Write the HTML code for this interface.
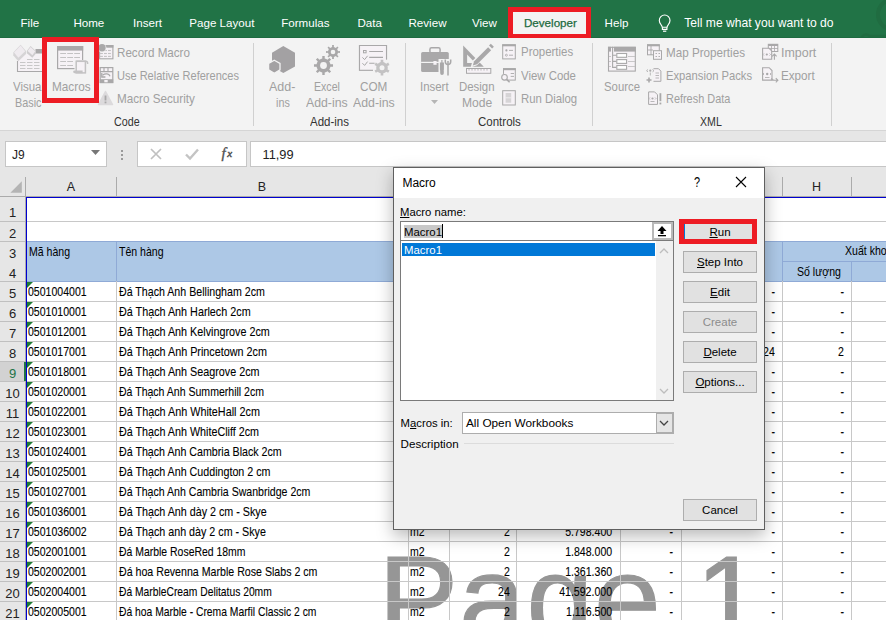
<!DOCTYPE html>
<html><head><meta charset="utf-8"><style>
html,body{margin:0;padding:0;width:886px;height:620px;overflow:hidden;background:#fff;font-family:"Liberation Sans", sans-serif;}
.t{position:absolute;white-space:nowrap;line-height:20px;}
.g .t{-webkit-text-stroke:0.1px currentColor}
u{text-decoration:underline;text-underline-offset:1px}
</style></head><body>
<div style="position:absolute;left:0px;top:0px;width:886px;height:38px;background:#217346"></div>
<div class="t" style="left:20.5px;top:12.98px;font-size:11.6px;color:#fff;">File</div>
<div class="t" style="left:73.4px;top:12.98px;font-size:11.6px;color:#fff;">Home</div>
<div class="t" style="left:133px;top:12.98px;font-size:11.6px;color:#fff;">Insert</div>
<div class="t" style="left:189.3px;top:12.98px;font-size:11.6px;color:#fff;">Page Layout</div>
<div class="t" style="left:281.2px;top:12.98px;font-size:11.6px;color:#fff;">Formulas</div>
<div class="t" style="left:357.4px;top:12.98px;font-size:11.6px;color:#fff;">Data</div>
<div class="t" style="left:408.5px;top:12.98px;font-size:11.6px;color:#fff;">Review</div>
<div class="t" style="left:471.9px;top:12.98px;font-size:11.6px;color:#fff;">View</div>
<div class="t" style="left:604.6px;top:12.98px;font-size:11.6px;color:#fff;">Help</div>
<svg style="position:absolute;left:840px;top:0px" width="46" height="38" viewBox="0 0 46 38"><circle cx="53" cy="14.5" r="15" fill="none" stroke="#206c41" stroke-width="4"/><circle cx="26" cy="39" r="4.5" fill="none" stroke="#206c41" stroke-width="2.5"/><path d="M30 35.8h16" stroke="#206c41" stroke-width="2"/></svg>
<div style="position:absolute;left:0px;top:37px;width:886px;height:1px;background:#1d6a40"></div>
<div style="position:absolute;left:508px;top:7px;width:83px;height:32px;background:#f3f3f3;box-sizing:border-box;border:5px solid #ed1c24"></div>
<div class="t" style="left:524px;top:12.98px;font-size:11.6px;color:#1d6b3e;-webkit-text-stroke:0.25px #1d6b3e;">Developer</div>
<svg style="position:absolute;left:650px;top:8px" width="30" height="28" viewBox="0 0 30 28"><path d="M12.3 19.2C11.6 16.8 9.3 15.2 9.3 12.4A5.35 5.35 0 1 1 20 12.4C20 15.2 17.7 16.8 17 19.2z" fill="none" stroke="#fff" stroke-width="1.15"/><path d="M12.4 19.2V21.4H16.9V19.2" fill="none" stroke="#fff" stroke-width="1.15"/><path d="M13 23.2H16.3" stroke="#fff" stroke-width="1.2"/></svg>
<div class="t" style="left:684.3px;top:12.81px;font-size:12.1px;color:#fff;">Tell me what you want to do</div>
<div style="position:absolute;left:0px;top:38px;width:886px;height:92px;background:#f3f3f3"></div>
<div style="position:absolute;left:0px;top:130px;width:886px;height:1px;background:#d5d5d5"></div>
<div style="position:absolute;left:253px;top:43px;width:1px;height:83px;background:#d0d0d0"></div>
<div style="position:absolute;left:405px;top:43px;width:1px;height:83px;background:#d0d0d0"></div>
<div style="position:absolute;left:592px;top:43px;width:1px;height:83px;background:#d0d0d0"></div>
<div style="position:absolute;left:831px;top:43px;width:1px;height:83px;background:#d0d0d0"></div>
<div class="t" style="left:113.6px;transform: scaleX(0.8638);transform-origin:0 0;top:112.30px;font-size:12.4px;color:#333;">Code</div>
<div class="t" style="left:309.5px;transform: scaleX(0.9278);transform-origin:0 0;top:112.20px;font-size:12.4px;color:#333;">Add-ins</div>
<div class="t" style="left:477.7px;transform: scaleX(0.9288);transform-origin:0 0;top:112.20px;font-size:12.4px;color:#333;">Controls</div>
<div class="t" style="left:700.0px;transform: scaleX(0.8555);transform-origin:0 0;top:112.20px;font-size:12.4px;color:#333;">XML</div>
<div class="t" style="left:13.3px;transform: scaleX(0.9242);transform-origin:0 0;top:76.50px;font-size:12.4px;color:#a0a0a0;">Visual</div>
<div class="t" style="left:15.2px;transform: scaleX(0.8741);transform-origin:0 0;top:93.00px;font-size:12.4px;color:#a0a0a0;">Basic</div>
<div class="t" style="left:52.3px;transform: scaleX(0.9491);transform-origin:0 0;top:76.50px;font-size:12.4px;color:#a0a0a0;">Macros</div>
<div class="t" style="left:269.2px;transform: scaleX(1.0052);transform-origin:0 0;top:76.50px;font-size:12.4px;color:#a0a0a0;">Add-</div>
<div class="t" style="left:275.9px;transform: scaleX(0.8695);transform-origin:0 0;top:93.00px;font-size:12.4px;color:#a0a0a0;">ins</div>
<div class="t" style="left:314.3px;transform: scaleX(0.8543);transform-origin:0 0;top:76.50px;font-size:12.4px;color:#a0a0a0;">Excel</div>
<div class="t" style="left:306.2px;transform: scaleX(0.992);transform-origin:0 0;top:93.00px;font-size:12.4px;color:#a0a0a0;">Add-ins</div>
<div class="t" style="left:360.4px;transform: scaleX(0.9463);transform-origin:0 0;top:76.50px;font-size:12.4px;color:#a0a0a0;">COM</div>
<div class="t" style="left:353.0px;transform: scaleX(0.9944);transform-origin:0 0;top:93.00px;font-size:12.4px;color:#a0a0a0;">Add-ins</div>
<div class="t" style="left:420.4px;transform: scaleX(0.9226);transform-origin:0 0;top:76.50px;font-size:12.4px;color:#a0a0a0;">Insert</div>
<div class="t" style="left:459.0px;transform: scaleX(0.9217);transform-origin:0 0;top:76.50px;font-size:12.4px;color:#a0a0a0;">Design</div>
<div class="t" style="left:461.8px;transform: scaleX(0.9742);transform-origin:0 0;top:93.00px;font-size:12.4px;color:#a0a0a0;">Mode</div>
<div class="t" style="left:604.1px;transform: scaleX(0.9158);transform-origin:0 0;top:76.70px;font-size:12.4px;color:#a0a0a0;">Source</div>
<div class="t" style="left:116.7px;transform: scaleX(0.9374);transform-origin:0 0;top:42.70px;font-size:12.4px;color:#a0a0a0;">Record Macro</div>
<div class="t" style="left:116.7px;transform: scaleX(0.8896);transform-origin:0 0;top:65.70px;font-size:12.4px;color:#a0a0a0;">Use Relative References</div>
<div class="t" style="left:116.7px;transform: scaleX(0.9431);transform-origin:0 0;top:88.90px;font-size:12.4px;color:#a0a0a0;">Macro Security</div>
<div class="t" style="left:520.6px;transform: scaleX(0.9232);transform-origin:0 0;top:42.40px;font-size:12.4px;color:#a0a0a0;">Properties</div>
<div class="t" style="left:520.6px;transform: scaleX(0.9202);transform-origin:0 0;top:65.50px;font-size:12.4px;color:#a0a0a0;">View Code</div>
<div class="t" style="left:521.0px;transform: scaleX(0.9165);transform-origin:0 0;top:88.70px;font-size:12.4px;color:#a0a0a0;">Run Dialog</div>
<div class="t" style="left:665.6px;transform: scaleX(0.9397);transform-origin:0 0;top:42.70px;font-size:12.4px;color:#a0a0a0;">Map Properties</div>
<div class="t" style="left:665.6px;transform: scaleX(0.9053);transform-origin:0 0;top:65.70px;font-size:12.4px;color:#a0a0a0;">Expansion Packs</div>
<div class="t" style="left:665.6px;transform: scaleX(0.881);transform-origin:0 0;top:88.70px;font-size:12.4px;color:#a0a0a0;">Refresh Data</div>
<div class="t" style="left:781.3px;transform: scaleX(1.0042);transform-origin:0 0;top:42.70px;font-size:12.4px;color:#a0a0a0;">Import</div>
<div class="t" style="left:781.3px;transform: scaleX(0.9404);transform-origin:0 0;top:65.70px;font-size:12.4px;color:#a0a0a0;">Export</div>
<svg style="position:absolute;left:8px;top:40px" width="40" height="40" viewBox="0 0 40 40">
<rect x="9.5" y="13.8" width="26" height="17.6" fill="#f6f2f6"/>
<path d="M9.5 21v10.5h27" fill="none" stroke="#a9a8a9" stroke-width="1.1"/>
<rect x="27.5" y="9" width="7" height="4.5" fill="#a9a8a9"/>
<path d="M19 19.5h5.5" stroke="#c3c2c3" stroke-width="0.9"/><path d="M26 19.5h5.5" stroke="#c3c2c3" stroke-width="0.9"/><path d="M12 22.5h5.5" stroke="#c3c2c3" stroke-width="0.9"/><path d="M19 22.5h5.5" stroke="#c3c2c3" stroke-width="0.9"/><path d="M26 22.5h5.5" stroke="#c3c2c3" stroke-width="0.9"/><path d="M12 25.5h5.5" stroke="#c3c2c3" stroke-width="0.9"/><path d="M19 25.5h5.5" stroke="#c3c2c3" stroke-width="0.9"/><path d="M26 25.5h5.5" stroke="#c3c2c3" stroke-width="0.9"/><path d="M12 28.5h5.5" stroke="#c3c2c3" stroke-width="0.9"/><path d="M19 28.5h5.5" stroke="#c3c2c3" stroke-width="0.9"/><path d="M26 28.5h5.5" stroke="#c3c2c3" stroke-width="0.9"/>
<path d="M12.6 4.8L18 11V14L10.4 21.2L5.3 15.6V12.6z" fill="#d6d4d6"/>
<path d="M12.6 5.6L17.2 11.2L10.4 17.8L6 12.6z" fill="#efebef"/>
<path d="M22.6 6.1L28 11.2V13.5L24.4 17.8L18.8 13.2V11z" fill="#cfcdcf"/>
<path d="M22.6 6.9L27.2 11.3L24.4 15.2L19.6 11.1z" fill="#efebef"/>
</svg>
<svg style="position:absolute;left:50px;top:40px" width="45" height="40" viewBox="0 0 45 40">
<rect x="7.6" y="6.6" width="25" height="22" fill="#f6f2f6" stroke="#a9a8a9" stroke-width="1.2"/>
<rect x="7" y="6" width="26.2" height="4.6" fill="#a9a8a9"/>
<path d="M10.2 13.5h5.8" stroke="#c3c2c3" stroke-width="1"/><path d="M17.2 13.5h5.8" stroke="#c3c2c3" stroke-width="1"/><path d="M24.2 13.5h5.8" stroke="#c3c2c3" stroke-width="1"/><path d="M10.2 17.5h5.8" stroke="#c3c2c3" stroke-width="1"/><path d="M17.2 17.5h5.8" stroke="#c3c2c3" stroke-width="1"/><path d="M24.2 17.5h5.8" stroke="#c3c2c3" stroke-width="1"/><path d="M10.2 21.5h5.8" stroke="#c3c2c3" stroke-width="1"/><path d="M17.2 21.5h5.8" stroke="#c3c2c3" stroke-width="1"/><path d="M10.2 25.5h5.8" stroke="#c3c2c3" stroke-width="1"/><path d="M17.2 25.5h5.8" stroke="#c3c2c3" stroke-width="1"/>
<path d="M24.5 20h14.5v13.8h-14.5z" fill="#f3f3f3"/>
<path d="M26.2 21.3h9.6a1.8 1.8 0 0 1 1.8 1.8v0.8" fill="none" stroke="#c3c2c3" stroke-width="1.5"/>
<rect x="26.2" y="21.3" width="9.2" height="11.6" fill="#f6f2f6" stroke="#c3c2c3" stroke-width="1.5"/>
<path d="M24.6 30.4h8v2.9h-8a1.45 1.45 0 0 1 0-2.9z" fill="#c3c2c3"/>
</svg>
<svg style="position:absolute;left:95px;top:42px" width="20" height="20" viewBox="0 0 20 20">
<rect x="4.6" y="3.6" width="13.3" height="13.2" fill="#f6f2f6" stroke="#a9a8a9" stroke-width="1.1"/>
<rect x="11" y="3" width="7.4" height="2.7" fill="#a9a8a9"/>
<path d="M5 8.5h2.9" stroke="#c3c2c3" stroke-width="1.1"/><path d="M9 8.5h2.9" stroke="#c3c2c3" stroke-width="1.1"/><path d="M13 8.5h2.9" stroke="#c3c2c3" stroke-width="1.1"/><path d="M5 11.5h2.9" stroke="#c3c2c3" stroke-width="1.1"/><path d="M9 11.5h2.9" stroke="#c3c2c3" stroke-width="1.1"/><path d="M13 11.5h2.9" stroke="#c3c2c3" stroke-width="1.1"/><path d="M5 14.4h2.9" stroke="#c3c2c3" stroke-width="1.1"/><path d="M9 14.4h2.9" stroke="#c3c2c3" stroke-width="1.1"/><path d="M13 14.4h2.9" stroke="#c3c2c3" stroke-width="1.1"/>
<circle cx="7" cy="5.8" r="4.4" fill="#f3f3f3"/>
<circle cx="7" cy="5.8" r="3.7" fill="#a9a8a9"/>
</svg>
<svg style="position:absolute;left:95px;top:65px" width="20" height="20" viewBox="0 0 20 20">
<rect x="5.2" y="2.6" width="12.6" height="15" fill="#f6f2f6" stroke="#a9a8a9" stroke-width="1.2"/>
<path d="M5 6.6h13M9 2.5v4M13 2.5v4" stroke="#a9a8a9" stroke-width="1.1"/>
<rect x="4.8" y="14.2" width="13.4" height="3.8" fill="#a9a8a9"/>
<rect x="9.3" y="15" width="3.4" height="2.3" fill="#f6f2f6"/>
<path d="M15 11.2c-1-2.5-4.5-3.2-7.5-1" fill="none" stroke="#a9a8a9" stroke-width="1.3"/>
<path d="M6.8 8v4h3.6" fill="none" stroke="#a9a8a9" stroke-width="1.3"/>
</svg>
<svg style="position:absolute;left:95px;top:88px" width="20" height="20" viewBox="0 0 20 20">
<path d="M10.5 3.5L17.5 16.5H3.5z" fill="#dcdadc" stroke="#dcdadc" stroke-width="1.5" stroke-linejoin="round"/>
<rect x="9.6" y="7.5" width="1.8" height="5" fill="#a9a8a9"/><rect x="9.6" y="13.5" width="1.8" height="1.8" fill="#a9a8a9"/>
</svg>
<svg style="position:absolute;left:262px;top:40px" width="40" height="40" viewBox="0 0 40 40">
<path d="M21.3 6L33 12.8V26.5L21.3 33L10 26.5V12.8z" fill="#a3a1a3"/>
<path d="M12.3 20.3L18 23.5V29.8L12.3 33.2L6.6 29.8V23.5z" fill="#a3a1a3" stroke="#f3f3f3" stroke-width="1.3"/>
</svg>
<svg style="position:absolute;left:308px;top:40px" width="40" height="40" viewBox="0 0 40 40"><path d="M12.82 19.03 L14.30 18.60 L14.30 15.98 L16.70 15.98 L16.70 18.60 L18.18 19.03 L19.53 19.77 L21.38 17.91 L23.09 19.62 L21.23 21.47 L21.97 22.82 L22.40 24.30 L25.02 24.30 L25.02 26.70 L22.40 26.70 L21.97 28.18 L21.23 29.53 L23.09 31.38 L21.38 33.09 L19.53 31.23 L18.18 31.97 L16.70 32.40 L16.70 35.02 L14.30 35.02 L14.30 32.40 L12.82 31.97 L11.47 31.23 L9.62 33.09 L7.91 31.38 L9.77 29.53 L9.03 28.18 L8.60 26.70 L5.98 26.70 L5.98 24.30 L8.60 24.30 L9.03 22.82 L9.77 21.47 L7.91 19.62 L9.62 17.91 L11.47 19.77Z" fill="#a9a8a9"/><circle cx="15.5" cy="25.5" r="3.4" fill="#f3f3f3"/><path d="M23.09 7.38 L24.14 7.07 L24.12 5.06 L25.88 5.06 L25.86 7.07 L26.91 7.38 L27.88 7.91 L29.29 6.47 L30.53 7.71 L29.09 9.12 L29.62 10.09 L29.93 11.14 L31.94 11.12 L31.94 12.88 L29.93 12.86 L29.62 13.91 L29.09 14.88 L30.53 16.29 L29.29 17.53 L27.88 16.09 L26.91 16.62 L25.86 16.93 L25.88 18.94 L24.12 18.94 L24.14 16.93 L23.09 16.62 L22.12 16.09 L20.71 17.53 L19.47 16.29 L20.91 14.88 L20.38 13.91 L20.07 12.86 L18.06 12.88 L18.06 11.12 L20.07 11.14 L20.38 10.09 L20.91 9.12 L19.47 7.71 L20.71 6.47 L22.12 7.91Z" fill="#a9a8a9"/><circle cx="25" cy="12" r="2.3" fill="#f3f3f3"/></svg>
<svg style="position:absolute;left:354px;top:40px" width="40" height="40" viewBox="0 0 40 40">
<path d="M19 30.3H5.5V5.5H32.5V19.5" fill="#f6f2f6" stroke="#a9a8a9" stroke-width="1.1"/>
<path d="M5.5 30.3V5.5H32.5V19.5L19 30.3z" fill="#f6f2f6"/>
<path d="M19 30.3H5.5V5.5H32.5V19.5" fill="none" stroke="#a9a8a9" stroke-width="1.1"/>
<rect x="9.5" y="10.5" width="2.6" height="2.3" fill="none" stroke="#a9a8a9" stroke-width="1"/>
<path d="M15.2 11.5H29M15.2 17.4H29M15.2 23.2H20.6" stroke="#a9a8a9" stroke-width="1.1"/>
<path d="M8.4 17.4l2.2 2.2 3-3.8M8.4 23.2l2.2 2.2 3-3.8" fill="none" stroke="#a9a8a9" stroke-width="1"/>
<path d="M25.10 22.68 L26.68 22.05 L26.67 19.81 L29.33 19.81 L29.32 22.05 L30.90 22.68 L32.23 23.73 L34.16 22.60 L35.50 24.91 L33.55 26.02 L33.80 27.70 L33.55 29.38 L35.50 30.49 L34.16 32.80 L32.23 31.67 L30.90 32.72 L29.32 33.35 L29.33 35.59 L26.67 35.59 L26.68 33.35 L25.10 32.72 L23.77 31.67 L21.84 32.80 L20.50 30.49 L22.45 29.38 L22.20 27.70 L22.45 26.02 L20.50 24.91 L21.84 22.60 L23.77 23.73Z" fill="#c3c2c3"/><circle cx="28" cy="27.7" r="2.5" fill="#f3f3f3"/></svg>
<svg style="position:absolute;left:414px;top:40px" width="40" height="40" viewBox="0 0 40 40">
<rect x="15.9" y="7.8" width="10.2" height="5" rx="1.6" fill="none" stroke="#a9a8a9" stroke-width="1.5"/>
<rect x="7.1" y="11.9" width="27.7" height="20.1" rx="1.6" fill="#a9a8a9"/>
<rect x="7.1" y="21.8" width="27.7" height="1.2" fill="#f3f3f3"/>
<rect x="19.4" y="21" width="3.2" height="3.8" fill="#f6f2f6"/>
<path d="M24.5 19v17.5h13.5v-17.5z" fill="#f3f3f3"/>
<path d="M27.9 20v3M26.5 23h2.8v6.5a1.4 1.4 0 0 1-2.8 0z" fill="#a9a8a9" stroke="#a9a8a9" stroke-width="1.2"/>
<path d="M26.2 30.5h3.6v2.8a1.8 1.8 0 0 1-3.6 0z" fill="#a9a8a9"/>
<path d="M34 21v14.5" stroke="#a9a8a9" stroke-width="1.5"/>
<path d="M31.3 19.5v2.2a2.7 2.7 0 0 0 5.4 0v-2.2" fill="none" stroke="#a9a8a9" stroke-width="1.5"/>
</svg>
<svg style="position:absolute;left:458px;top:40px" width="40" height="40" viewBox="0 0 40 40">
<path d="M5.2 5.5V26.8H25.8z" fill="#a9a8a9"/>
<path d="M9.1 14.5V22.9H17.2z" fill="#f3f3f3"/>
<path d="M12.6 27.5l2-6.8L31.5 3.8 36 8.3 19 25.3z" fill="#f3f3f3"/>
<path d="M14.8 25.5l1.3-4.3 14-14 3 3-14 14z" fill="#a9a8a9"/>
<path d="M31 5.5l1.8-1.8 3.1 3.1-1.8 1.8z" fill="#a9a8a9"/>
<rect x="8.5" y="28.5" width="24.3" height="4.8" fill="#f6f2f6" stroke="#a9a8a9" stroke-width="1"/>
<path d="M11 29v1.6" stroke="#a9a8a9" stroke-width="0.8"/><path d="M14 29v1.6" stroke="#a9a8a9" stroke-width="0.8"/><path d="M17 29v1.6" stroke="#a9a8a9" stroke-width="0.8"/><path d="M20 29v1.6" stroke="#a9a8a9" stroke-width="0.8"/><path d="M23 29v1.6" stroke="#a9a8a9" stroke-width="0.8"/><path d="M26 29v1.6" stroke="#a9a8a9" stroke-width="0.8"/><path d="M29 29v1.6" stroke="#a9a8a9" stroke-width="0.8"/></svg>
<svg style="position:absolute;left:496px;top:40px" width="24" height="70" viewBox="0 0 24 70">
<rect x="6.7" y="4.8" width="12.6" height="14.1" fill="#f6f2f6" stroke="#a9a8a9" stroke-width="1"/>
<rect x="6.2" y="4.3" width="13.6" height="2" fill="#a9a8a9"/>
<circle cx="10.4" cy="10.4" r="1.1" fill="#a9a8a9"/><circle cx="10.4" cy="15.2" r="1" fill="none" stroke="#a9a8a9" stroke-width="0.8"/>
<path d="M13 10.4h4M13 15.2h4" stroke="#a9a8a9" stroke-width="0.9"/>
<rect x="7.5" y="28.7" width="11.8" height="11.4" fill="#f6f2f6" stroke="#a9a8a9" stroke-width="1"/>
<rect x="7" y="28.2" width="12.8" height="2" fill="#a9a8a9"/>
<path d="M14.7 33.5h3.3M14.7 36.4h3.3" stroke="#a9a8a9" stroke-width="0.9"/>
<circle cx="8.5" cy="37.3" r="3.6" fill="#f3f3f3"/>
<circle cx="8.5" cy="37.3" r="2.8" fill="#f6f2f6" stroke="#a9a8a9" stroke-width="1.1"/>
<path d="M10.6 39.4l3 2.8" stroke="#a9a8a9" stroke-width="1.5"/>
<rect x="6.7" y="50.7" width="12.6" height="14.3" fill="#f6f2f6" stroke="#a9a8a9" stroke-width="1"/>
<rect x="9.6" y="53" width="5.6" height="9.7" fill="#d6d4d6"/>
<path d="M9.6 57.8h5.6" stroke="#f3f3f3" stroke-width="0.8"/>
</svg>
<svg style="position:absolute;left:600px;top:40px" width="40" height="40" viewBox="0 0 40 40">
<rect x="8.5" y="7.3" width="26.8" height="23.8" fill="#f6f2f6" stroke="#a9a8a9" stroke-width="1.1"/>
<rect x="8" y="6.8" width="3" height="4.8" fill="#a9a8a9"/>
<rect x="14" y="6.8" width="21.8" height="4.8" fill="#a9a8a9"/>
<path d="M12.6 6.8V27.4H16.5M12.6 15.3H16.5M12.6 21.4H16.5" fill="none" stroke="#a9a8a9" stroke-width="1.1"/>
<rect x="16.8" y="13.5" width="9.8" height="3.8" fill="#fff" stroke="#a9a8a9" stroke-width="1.1"/>
<rect x="16.8" y="19.6" width="9.8" height="3.8" fill="#fff" stroke="#a9a8a9" stroke-width="1.1"/>
<rect x="16.8" y="25.5" width="9.8" height="3.8" fill="#fff" stroke="#a9a8a9" stroke-width="1.1"/>
<path d="M28 16.5h7M28 21.5h7M28 26.5h7M9 16.5h2M9 21.5h2M9 26.5h2" stroke="#c3c2c3" stroke-width="0.9"/>
</svg>
<svg style="position:absolute;left:640px;top:40px" width="25" height="70" viewBox="0 0 25 70">
<rect x="7.5" y="4.8" width="11.8" height="10" fill="#f6f2f6" stroke="#a9a8a9" stroke-width="1"/>
<rect x="7" y="4.3" width="12.8" height="2" fill="#a9a8a9"/>
<path d="M11 6v9M7 10h6" stroke="#a9a8a9" stroke-width="0.9"/>
<rect x="13.5" y="10.7" width="8" height="8.6" fill="#f6f2f6" stroke="#a9a8a9" stroke-width="1"/>
<path d="M15.5 13.5h1.5M18.5 13.5h1.5M15.5 16.5h1.5M18.5 16.5h1.5" stroke="#a9a8a9" stroke-width="0.9"/>
<path d="M13.5 28.7h5l2.4 2.4v10.2h-7.4" fill="#f6f2f6" stroke="#a9a8a9" stroke-width="1"/>
<path d="M15.5 33h3.5M15.5 35.5h3.5M15.5 38h3.5" stroke="#a9a8a9" stroke-width="0.8"/>
<path d="M8 29.5l-1.5 1.2 1.5 1.2M12.5 29.5l1.5 1.2-1.5 1.2" fill="none" stroke="#a9a8a9" stroke-width="0.8"/>
<circle cx="10.3" cy="30.7" r="1.1" fill="#a9a8a9"/><path d="M10.3 32.5v3" stroke="#a9a8a9" stroke-width="0.8"/>
<path d="M9 37.5v5M6.5 40h5" stroke="#a9a8a9" stroke-width="1.6"/>
<path d="M8.6 51.9h6l2.9 2.9v9.6h-8.9z" fill="#f6f2f6" stroke="#a9a8a9" stroke-width="1"/>
<path d="M10 57.5l-1 1 1 1M15 57.5l1 1-1 1" fill="none" stroke="#a9a8a9" stroke-width="0.8"/>
<circle cx="12.5" cy="58.5" r="1.1" fill="#a9a8a9"/><path d="M10.5 61.5h4" stroke="#a9a8a9" stroke-width="0.8"/>
<rect x="19.5" y="53.2" width="1.8" height="8" fill="#a9a8a9"/><rect x="19.5" y="62.6" width="1.8" height="1.8" fill="#a9a8a9"/>
</svg>
<svg style="position:absolute;left:755px;top:40px" width="30" height="50" viewBox="0 0 30 50">
<rect x="13.3" y="4.3" width="9.5" height="7.2" fill="#f6f2f6" stroke="#a9a8a9" stroke-width="1"/>
<rect x="13" y="4" width="10" height="2" fill="#a9a8a9"/>
<path d="M16.5 6v5.5M19.5 6v5.5M13 8.5h10" stroke="#a9a8a9" stroke-width="0.8"/>
<path d="M7.6 8.3h6.5l2.6 2.6v8.3h-9.1z" fill="#f6f2f6" stroke="#a9a8a9" stroke-width="1.1"/>
<path d="M9 13.5l-1 1 1 1M14.5 13.5l1 1-1 1" fill="none" stroke="#a9a8a9" stroke-width="0.8"/>
<circle cx="11.8" cy="14.5" r="1.1" fill="#a9a8a9"/>
<path d="M19.4 19.8v-5.5M17.2 16.3l2.2-2.3 2.2 2.3" fill="none" stroke="#a9a8a9" stroke-width="1.1"/>
<path d="M7.6 27.7h6.6l2.8 2.8v9.6h-9.4z" fill="#f6f2f6" stroke="#a9a8a9" stroke-width="1.1"/>
<path d="M9 33l-1 1 1 1M15 33l1 1-1 1" fill="none" stroke="#a9a8a9" stroke-width="0.8"/>
<circle cx="12.2" cy="34" r="1.2" fill="#a9a8a9"/><path d="M10 37.5h4.5" stroke="#a9a8a9" stroke-width="0.8"/>
<path d="M16.5 38.3c0 1.6 1.5 2 3 2h3M20.8 38.2l2.1 2.1-2.1 2.1" fill="none" stroke="#a9a8a9" stroke-width="1.1"/>
</svg>
<svg style="position:absolute;left:430px;top:99px" width="9" height="6" viewBox="0 0 9 6"><path d="M1 1h7L4.5 5z" fill="#b5b5b5"/></svg>
<div style="position:absolute;left:0px;top:131px;width:886px;height:46px;background:#e6e6e6"></div>
<div style="position:absolute;left:5px;top:141px;width:102px;height:26px;background:#fff;box-sizing:border-box;border:1px solid #c6c6c6"></div>
<div class="t" style="left:12px;top:144.84px;font-size:12px;color:#222;">J9</div>
<svg style="position:absolute;left:90px;top:148px" width="12" height="8" viewBox="0 0 12 8"><path d="M1 2h9l-4.5 5z" fill="#777"/></svg>
<div style="position:absolute;left:121px;top:150px;width:2px;height:2px;background:#9a9a9a"></div>
<div style="position:absolute;left:121px;top:154px;width:2px;height:2px;background:#9a9a9a"></div>
<div style="position:absolute;left:121px;top:158px;width:2px;height:2px;background:#9a9a9a"></div>
<div style="position:absolute;left:137px;top:141px;width:110px;height:26px;background:#fff;box-sizing:border-box;border:1px solid #c6c6c6"></div>
<svg style="position:absolute;left:149px;top:147px" width="14" height="14" viewBox="0 0 14 14"><path d="M2 2l10 10M12 2L2 12" stroke="#c0c0c0" stroke-width="1.7"/></svg>
<svg style="position:absolute;left:184px;top:147px" width="16" height="14" viewBox="0 0 16 14"><path d="M2 7.5l4 4 8-9" fill="none" stroke="#c4c4c4" stroke-width="2.4"/></svg>
<svg style="position:absolute;left:220px;top:145px" width="18" height="18" viewBox="0 0 18 18"><text x="1.5" y="12.5" font-family="Liberation Serif" font-style="italic" font-size="15" fill="#505050" stroke="#505050" stroke-width="0.35">f</text><text x="7.3" y="12.3" font-family="Liberation Serif" font-style="italic" font-size="11" fill="#505050" stroke="#505050" stroke-width="0.45">x</text></svg>
<div style="position:absolute;left:250px;top:141px;width:640px;height:26px;background:#fff;box-sizing:border-box;border:1px solid #c6c6c6"></div>
<div class="t" style="left:262.5px;top:144.56px;font-size:12.8px;color:#222;">11,99</div>
<div style="position:absolute;left:0px;top:177px;width:886px;height:20px;background:#e6e6e6"></div>
<div style="position:absolute;left:0px;top:196px;width:886px;height:1px;background:#ababab"></div>
<div style="position:absolute;left:25px;top:177px;width:1px;height:444px;background:#ababab"></div>
<svg style="position:absolute;left:8px;top:179px" width="16" height="16" viewBox="0 0 16 16"><path d="M13.8 2.2V13.8H2.4z" fill="#b4b4b4"/></svg>
<div class="t" style="left:71.0px;transform:translateX(-50%);top:176.67px;font-size:12.5px;color:#222;">A</div>
<div style="position:absolute;left:116px;top:177px;width:1px;height:20px;background:#ababab"></div>
<div class="t" style="left:262.0px;transform:translateX(-50%);top:176.67px;font-size:12.5px;color:#222;">B</div>
<div style="position:absolute;left:408px;top:177px;width:1px;height:20px;background:#ababab"></div>
<div class="t" style="left:428.5px;transform:translateX(-50%);top:176.67px;font-size:12.5px;color:#222;">C</div>
<div style="position:absolute;left:449px;top:177px;width:1px;height:20px;background:#ababab"></div>
<div class="t" style="left:482.5px;transform:translateX(-50%);top:176.67px;font-size:12.5px;color:#222;">D</div>
<div style="position:absolute;left:516px;top:177px;width:1px;height:20px;background:#ababab"></div>
<div class="t" style="left:568.0px;transform:translateX(-50%);top:176.67px;font-size:12.5px;color:#222;">E</div>
<div style="position:absolute;left:620px;top:177px;width:1px;height:20px;background:#ababab"></div>
<div class="t" style="left:650.5px;transform:translateX(-50%);top:176.67px;font-size:12.5px;color:#222;">F</div>
<div style="position:absolute;left:681px;top:177px;width:1px;height:20px;background:#ababab"></div>
<div class="t" style="left:731.5px;transform:translateX(-50%);top:176.67px;font-size:12.5px;color:#222;">G</div>
<div style="position:absolute;left:782px;top:177px;width:1px;height:20px;background:#ababab"></div>
<div class="t" style="left:816.5px;transform:translateX(-50%);top:176.67px;font-size:12.5px;color:#222;">H</div>
<div style="position:absolute;left:851px;top:177px;width:1px;height:20px;background:#ababab"></div>
<div class="t" style="left:900.5px;transform:translateX(-50%);top:176.67px;font-size:12.5px;color:#222;">I</div>
<div style="position:absolute;left:26px;top:197px;width:860px;height:424px;background:#fff"></div>
<div style="position:absolute;left:0px;top:197px;width:25px;height:424px;background:#e6e6e6"></div>
<div style="position:absolute;left:26px;top:241px;width:860px;height:40px;background:#adc8e6"></div>
<div class="t" style="left:378.3px;top:528.3px;font-size:120px;line-height:140px;color:#969696;-webkit-text-stroke:1.2px #969696;letter-spacing:0.7px">Page 1</div>
<div style="position:absolute;left:26px;top:221px;width:860px;height:1px;background:#c8c8c8"></div>
<div style="position:absolute;left:0px;top:221px;width:25px;height:1px;background:#c0c0c0"></div>
<div style="position:absolute;left:26px;top:241px;width:860px;height:1px;background:#8faad6"></div>
<div style="position:absolute;left:0px;top:241px;width:25px;height:1px;background:#c0c0c0"></div>
<div style="position:absolute;left:782px;top:261px;width:104px;height:1px;background:#8faad6"></div>
<div style="position:absolute;left:26px;top:281px;width:860px;height:1px;background:#8faad6"></div>
<div style="position:absolute;left:0px;top:281px;width:25px;height:1px;background:#c0c0c0"></div>
<div style="position:absolute;left:26px;top:301px;width:860px;height:1px;background:#c8c8c8"></div>
<div style="position:absolute;left:0px;top:301px;width:25px;height:1px;background:#c0c0c0"></div>
<div style="position:absolute;left:26px;top:321px;width:860px;height:1px;background:#c8c8c8"></div>
<div style="position:absolute;left:0px;top:321px;width:25px;height:1px;background:#c0c0c0"></div>
<div style="position:absolute;left:26px;top:341px;width:860px;height:1px;background:#c8c8c8"></div>
<div style="position:absolute;left:0px;top:341px;width:25px;height:1px;background:#c0c0c0"></div>
<div style="position:absolute;left:26px;top:361px;width:860px;height:1px;background:#c8c8c8"></div>
<div style="position:absolute;left:0px;top:361px;width:25px;height:1px;background:#c0c0c0"></div>
<div style="position:absolute;left:26px;top:381px;width:860px;height:1px;background:#c8c8c8"></div>
<div style="position:absolute;left:0px;top:381px;width:25px;height:1px;background:#c0c0c0"></div>
<div style="position:absolute;left:26px;top:401px;width:860px;height:1px;background:#c8c8c8"></div>
<div style="position:absolute;left:0px;top:401px;width:25px;height:1px;background:#c0c0c0"></div>
<div style="position:absolute;left:26px;top:421px;width:860px;height:1px;background:#c8c8c8"></div>
<div style="position:absolute;left:0px;top:421px;width:25px;height:1px;background:#c0c0c0"></div>
<div style="position:absolute;left:26px;top:441px;width:860px;height:1px;background:#c8c8c8"></div>
<div style="position:absolute;left:0px;top:441px;width:25px;height:1px;background:#c0c0c0"></div>
<div style="position:absolute;left:26px;top:461px;width:860px;height:1px;background:#c8c8c8"></div>
<div style="position:absolute;left:0px;top:461px;width:25px;height:1px;background:#c0c0c0"></div>
<div style="position:absolute;left:26px;top:481px;width:860px;height:1px;background:#c8c8c8"></div>
<div style="position:absolute;left:0px;top:481px;width:25px;height:1px;background:#c0c0c0"></div>
<div style="position:absolute;left:26px;top:501px;width:860px;height:1px;background:#c8c8c8"></div>
<div style="position:absolute;left:0px;top:501px;width:25px;height:1px;background:#c0c0c0"></div>
<div style="position:absolute;left:26px;top:521px;width:860px;height:1px;background:#c8c8c8"></div>
<div style="position:absolute;left:0px;top:521px;width:25px;height:1px;background:#c0c0c0"></div>
<div style="position:absolute;left:26px;top:541px;width:860px;height:1px;background:#c8c8c8"></div>
<div style="position:absolute;left:0px;top:541px;width:25px;height:1px;background:#c0c0c0"></div>
<div style="position:absolute;left:26px;top:561px;width:860px;height:1px;background:#c8c8c8"></div>
<div style="position:absolute;left:0px;top:561px;width:25px;height:1px;background:#c0c0c0"></div>
<div style="position:absolute;left:26px;top:581px;width:860px;height:1px;background:#c8c8c8"></div>
<div style="position:absolute;left:0px;top:581px;width:25px;height:1px;background:#c0c0c0"></div>
<div style="position:absolute;left:26px;top:601px;width:860px;height:1px;background:#c8c8c8"></div>
<div style="position:absolute;left:0px;top:601px;width:25px;height:1px;background:#c0c0c0"></div>
<div style="position:absolute;left:26px;top:621px;width:860px;height:1px;background:#c8c8c8"></div>
<div style="position:absolute;left:0px;top:621px;width:25px;height:1px;background:#c0c0c0"></div>
<div style="position:absolute;left:116px;top:281px;width:1px;height:340px;background:#c8c8c8"></div>
<div style="position:absolute;left:116px;top:241px;width:1px;height:40px;background:#8faad6"></div>
<div style="position:absolute;left:408px;top:281px;width:1px;height:340px;background:#c8c8c8"></div>
<div style="position:absolute;left:408px;top:241px;width:1px;height:40px;background:#8faad6"></div>
<div style="position:absolute;left:449px;top:281px;width:1px;height:340px;background:#c8c8c8"></div>
<div style="position:absolute;left:449px;top:241px;width:1px;height:40px;background:#8faad6"></div>
<div style="position:absolute;left:516px;top:281px;width:1px;height:340px;background:#c8c8c8"></div>
<div style="position:absolute;left:516px;top:241px;width:1px;height:40px;background:#8faad6"></div>
<div style="position:absolute;left:620px;top:281px;width:1px;height:340px;background:#c8c8c8"></div>
<div style="position:absolute;left:620px;top:241px;width:1px;height:40px;background:#8faad6"></div>
<div style="position:absolute;left:681px;top:281px;width:1px;height:340px;background:#c8c8c8"></div>
<div style="position:absolute;left:681px;top:241px;width:1px;height:40px;background:#8faad6"></div>
<div style="position:absolute;left:782px;top:281px;width:1px;height:340px;background:#c8c8c8"></div>
<div style="position:absolute;left:782px;top:241px;width:1px;height:40px;background:#8faad6"></div>
<div style="position:absolute;left:851px;top:281px;width:1px;height:340px;background:#c8c8c8"></div>
<div style="position:absolute;left:851px;top:261px;width:1px;height:20px;background:#8faad6"></div>
<div style="position:absolute;left:26px;top:197px;width:860px;height:1px;background:#0000d0"></div>
<div style="position:absolute;left:26px;top:197px;width:1px;height:424px;background:#0000d0"></div>
<div class="t" style="left:12.5px;transform:translateX(-50%);top:203.10px;font-size:13px;color:#222;">1</div>
<div class="t" style="left:12.5px;transform:translateX(-50%);top:223.70px;font-size:13px;color:#222;">2</div>
<div class="t" style="left:12.5px;transform:translateX(-50%);top:243.70px;font-size:13px;color:#222;">3</div>
<div class="t" style="left:12.5px;transform:translateX(-50%);top:263.70px;font-size:13px;color:#222;">4</div>
<div class="t" style="left:12.5px;transform:translateX(-50%);top:283.70px;font-size:13px;color:#222;">5</div>
<div class="t" style="left:12.5px;transform:translateX(-50%);top:303.70px;font-size:13px;color:#222;">6</div>
<div class="t" style="left:12.5px;transform:translateX(-50%);top:323.70px;font-size:13px;color:#222;">7</div>
<div class="t" style="left:12.5px;transform:translateX(-50%);top:343.70px;font-size:13px;color:#222;">8</div>
<div style="position:absolute;left:0px;top:362px;width:24px;height:19px;background:#d2d2d2"></div>
<div style="position:absolute;left:24px;top:362px;width:2px;height:19px;background:#217346"></div>
<div class="t" style="left:12.5px;transform:translateX(-50%);top:363.70px;font-size:13px;color:#217346;">9</div>
<div class="t" style="left:12.5px;transform:translateX(-50%);top:383.70px;font-size:13px;color:#222;">10</div>
<div class="t" style="left:12.5px;transform:translateX(-50%);top:403.70px;font-size:13px;color:#222;">11</div>
<div class="t" style="left:12.5px;transform:translateX(-50%);top:423.70px;font-size:13px;color:#222;">12</div>
<div class="t" style="left:12.5px;transform:translateX(-50%);top:443.70px;font-size:13px;color:#222;">13</div>
<div class="t" style="left:12.5px;transform:translateX(-50%);top:463.70px;font-size:13px;color:#222;">14</div>
<div class="t" style="left:12.5px;transform:translateX(-50%);top:483.70px;font-size:13px;color:#222;">15</div>
<div class="t" style="left:12.5px;transform:translateX(-50%);top:503.70px;font-size:13px;color:#222;">16</div>
<div class="t" style="left:12.5px;transform:translateX(-50%);top:523.70px;font-size:13px;color:#222;">17</div>
<div class="t" style="left:12.5px;transform:translateX(-50%);top:543.70px;font-size:13px;color:#222;">18</div>
<div class="t" style="left:12.5px;transform:translateX(-50%);top:563.70px;font-size:13px;color:#222;">19</div>
<div class="t" style="left:12.5px;transform:translateX(-50%);top:583.70px;font-size:13px;color:#222;">20</div>
<div class="t" style="left:12.5px;transform:translateX(-50%);top:603.70px;font-size:13px;color:#222;">21</div>
<div class="t" style="left:28.5px;transform: scaleX(0.852);transform-origin:0 0;top:241.90px;font-size:12.4px;color:#000;">Mã hàng</div>
<div class="t" style="left:119px;transform: scaleX(0.852);transform-origin:0 0;top:241.90px;font-size:12.4px;color:#000;">Tên hàng</div>
<div class="t" style="left:797px;transform: scaleX(0.852);transform-origin:0 0;top:261.90px;font-size:12.4px;color:#000;">Số lượng</div>
<div class="t" style="left:845px;transform: scaleX(0.852);transform-origin:0 0;top:240.90px;font-size:12.4px;color:#000;">Xuất kho</div>
<div class="g" style="position:absolute;left:0;top:0;width:886px;height:620px;z-index:2">
<div class="t" style="left:28px;transform: scaleX(0.852);transform-origin:0 0;top:281.90px;font-size:12.4px;color:#000;">0501004001</div>
<div class="t" style="left:119.4px;transform: scaleX(0.8582);transform-origin:0 0;top:281.90px;font-size:12.4px;color:#000;">Đá Thạch Anh Bellingham 2cm</div>
<svg style="position:absolute;left:27px;top:282px" width="6" height="6" viewBox="0 0 6 6"><path d="M0 0h6L0 6z" fill="#1e7b34"/></svg>
<div class="t" style="left:410px;transform: scaleX(0.852);transform-origin:0 0;top:281.90px;font-size:12.4px;color:#000;">m2</div>
<div class="t" style="right:213px;transform: scaleX(0.852);transform-origin:100% 0;top:281.90px;font-size:12.4px;color:#000;">-</div>
<div class="t" style="right:111px;transform: scaleX(0.852);transform-origin:100% 0;top:281.90px;font-size:12.4px;color:#000;">-</div>
<div class="t" style="right:42px;transform: scaleX(0.852);transform-origin:100% 0;top:281.90px;font-size:12.4px;color:#000;">-</div>
<div class="t" style="left:28px;transform: scaleX(0.852);transform-origin:0 0;top:301.90px;font-size:12.4px;color:#000;">0501010001</div>
<div class="t" style="left:119.4px;transform: scaleX(0.8699);transform-origin:0 0;top:301.90px;font-size:12.4px;color:#000;">Đá Thạch Anh Harlech 2cm</div>
<svg style="position:absolute;left:27px;top:302px" width="6" height="6" viewBox="0 0 6 6"><path d="M0 0h6L0 6z" fill="#1e7b34"/></svg>
<div class="t" style="left:410px;transform: scaleX(0.852);transform-origin:0 0;top:301.90px;font-size:12.4px;color:#000;">m2</div>
<div class="t" style="right:213px;transform: scaleX(0.852);transform-origin:100% 0;top:301.90px;font-size:12.4px;color:#000;">-</div>
<div class="t" style="right:111px;transform: scaleX(0.852);transform-origin:100% 0;top:301.90px;font-size:12.4px;color:#000;">-</div>
<div class="t" style="right:42px;transform: scaleX(0.852);transform-origin:100% 0;top:301.90px;font-size:12.4px;color:#000;">-</div>
<div class="t" style="left:28px;transform: scaleX(0.852);transform-origin:0 0;top:321.90px;font-size:12.4px;color:#000;">0501012001</div>
<div class="t" style="left:119.4px;transform: scaleX(0.8699);transform-origin:0 0;top:321.90px;font-size:12.4px;color:#000;">Đá Thạch Anh Kelvingrove 2cm</div>
<svg style="position:absolute;left:27px;top:322px" width="6" height="6" viewBox="0 0 6 6"><path d="M0 0h6L0 6z" fill="#1e7b34"/></svg>
<div class="t" style="left:410px;transform: scaleX(0.852);transform-origin:0 0;top:321.90px;font-size:12.4px;color:#000;">m2</div>
<div class="t" style="right:213px;transform: scaleX(0.852);transform-origin:100% 0;top:321.90px;font-size:12.4px;color:#000;">-</div>
<div class="t" style="right:111px;transform: scaleX(0.852);transform-origin:100% 0;top:321.90px;font-size:12.4px;color:#000;">-</div>
<div class="t" style="right:42px;transform: scaleX(0.852);transform-origin:100% 0;top:321.90px;font-size:12.4px;color:#000;">-</div>
<div class="t" style="left:28px;transform: scaleX(0.852);transform-origin:0 0;top:341.90px;font-size:12.4px;color:#000;">0501017001</div>
<div class="t" style="left:119.4px;transform: scaleX(0.8706);transform-origin:0 0;top:341.90px;font-size:12.4px;color:#000;">Đá Thạch Anh Princetown 2cm</div>
<svg style="position:absolute;left:27px;top:342px" width="6" height="6" viewBox="0 0 6 6"><path d="M0 0h6L0 6z" fill="#1e7b34"/></svg>
<div class="t" style="left:410px;transform: scaleX(0.852);transform-origin:0 0;top:341.90px;font-size:12.4px;color:#000;">m2</div>
<div class="t" style="right:213px;transform: scaleX(0.852);transform-origin:100% 0;top:341.90px;font-size:12.4px;color:#000;">-</div>
<div class="t" style="right:111px;transform: scaleX(0.852);transform-origin:100% 0;top:341.90px;font-size:12.4px;color:#000;">24</div>
<div class="t" style="right:42px;transform: scaleX(0.852);transform-origin:100% 0;top:341.90px;font-size:12.4px;color:#000;">2</div>
<div class="t" style="left:28px;transform: scaleX(0.852);transform-origin:0 0;top:361.90px;font-size:12.4px;color:#000;">0501018001</div>
<div class="t" style="left:119.4px;transform: scaleX(0.8698);transform-origin:0 0;top:361.90px;font-size:12.4px;color:#000;">Đá Thạch Anh Seagrove 2cm</div>
<svg style="position:absolute;left:27px;top:362px" width="6" height="6" viewBox="0 0 6 6"><path d="M0 0h6L0 6z" fill="#1e7b34"/></svg>
<div class="t" style="left:410px;transform: scaleX(0.852);transform-origin:0 0;top:361.90px;font-size:12.4px;color:#000;">m2</div>
<div class="t" style="right:213px;transform: scaleX(0.852);transform-origin:100% 0;top:361.90px;font-size:12.4px;color:#000;">-</div>
<div class="t" style="right:111px;transform: scaleX(0.852);transform-origin:100% 0;top:361.90px;font-size:12.4px;color:#000;">-</div>
<div class="t" style="right:42px;transform: scaleX(0.852);transform-origin:100% 0;top:361.90px;font-size:12.4px;color:#000;">-</div>
<div class="t" style="left:28px;transform: scaleX(0.852);transform-origin:0 0;top:381.90px;font-size:12.4px;color:#000;">0501020001</div>
<div class="t" style="left:119.4px;transform: scaleX(0.8501);transform-origin:0 0;top:381.90px;font-size:12.4px;color:#000;">Đá Thạch Anh Summerhill 2cm</div>
<svg style="position:absolute;left:27px;top:382px" width="6" height="6" viewBox="0 0 6 6"><path d="M0 0h6L0 6z" fill="#1e7b34"/></svg>
<div class="t" style="left:410px;transform: scaleX(0.852);transform-origin:0 0;top:381.90px;font-size:12.4px;color:#000;">m2</div>
<div class="t" style="right:213px;transform: scaleX(0.852);transform-origin:100% 0;top:381.90px;font-size:12.4px;color:#000;">-</div>
<div class="t" style="right:111px;transform: scaleX(0.852);transform-origin:100% 0;top:381.90px;font-size:12.4px;color:#000;">-</div>
<div class="t" style="right:42px;transform: scaleX(0.852);transform-origin:100% 0;top:381.90px;font-size:12.4px;color:#000;">-</div>
<div class="t" style="left:28px;transform: scaleX(0.852);transform-origin:0 0;top:401.90px;font-size:12.4px;color:#000;">0501022001</div>
<div class="t" style="left:119.4px;transform: scaleX(0.8717);transform-origin:0 0;top:401.90px;font-size:12.4px;color:#000;">Đá Thạch Anh WhiteHall 2cm</div>
<svg style="position:absolute;left:27px;top:402px" width="6" height="6" viewBox="0 0 6 6"><path d="M0 0h6L0 6z" fill="#1e7b34"/></svg>
<div class="t" style="left:410px;transform: scaleX(0.852);transform-origin:0 0;top:401.90px;font-size:12.4px;color:#000;">m2</div>
<div class="t" style="right:213px;transform: scaleX(0.852);transform-origin:100% 0;top:401.90px;font-size:12.4px;color:#000;">-</div>
<div class="t" style="right:111px;transform: scaleX(0.852);transform-origin:100% 0;top:401.90px;font-size:12.4px;color:#000;">-</div>
<div class="t" style="right:42px;transform: scaleX(0.852);transform-origin:100% 0;top:401.90px;font-size:12.4px;color:#000;">-</div>
<div class="t" style="left:28px;transform: scaleX(0.852);transform-origin:0 0;top:421.90px;font-size:12.4px;color:#000;">0501023001</div>
<div class="t" style="left:119.4px;transform: scaleX(0.8674);transform-origin:0 0;top:421.90px;font-size:12.4px;color:#000;">Đá Thạch Anh WhiteCliff 2cm</div>
<svg style="position:absolute;left:27px;top:422px" width="6" height="6" viewBox="0 0 6 6"><path d="M0 0h6L0 6z" fill="#1e7b34"/></svg>
<div class="t" style="left:410px;transform: scaleX(0.852);transform-origin:0 0;top:421.90px;font-size:12.4px;color:#000;">m2</div>
<div class="t" style="right:213px;transform: scaleX(0.852);transform-origin:100% 0;top:421.90px;font-size:12.4px;color:#000;">-</div>
<div class="t" style="right:111px;transform: scaleX(0.852);transform-origin:100% 0;top:421.90px;font-size:12.4px;color:#000;">-</div>
<div class="t" style="right:42px;transform: scaleX(0.852);transform-origin:100% 0;top:421.90px;font-size:12.4px;color:#000;">-</div>
<div class="t" style="left:28px;transform: scaleX(0.852);transform-origin:0 0;top:441.90px;font-size:12.4px;color:#000;">0501024001</div>
<div class="t" style="left:119.4px;transform: scaleX(0.8601);transform-origin:0 0;top:441.90px;font-size:12.4px;color:#000;">Đá Thạch Anh Cambria Black 2cm</div>
<svg style="position:absolute;left:27px;top:442px" width="6" height="6" viewBox="0 0 6 6"><path d="M0 0h6L0 6z" fill="#1e7b34"/></svg>
<div class="t" style="left:410px;transform: scaleX(0.852);transform-origin:0 0;top:441.90px;font-size:12.4px;color:#000;">m2</div>
<div class="t" style="right:213px;transform: scaleX(0.852);transform-origin:100% 0;top:441.90px;font-size:12.4px;color:#000;">-</div>
<div class="t" style="right:111px;transform: scaleX(0.852);transform-origin:100% 0;top:441.90px;font-size:12.4px;color:#000;">-</div>
<div class="t" style="right:42px;transform: scaleX(0.852);transform-origin:100% 0;top:441.90px;font-size:12.4px;color:#000;">-</div>
<div class="t" style="left:28px;transform: scaleX(0.852);transform-origin:0 0;top:461.90px;font-size:12.4px;color:#000;">0501025001</div>
<div class="t" style="left:119.4px;transform: scaleX(0.8634);transform-origin:0 0;top:461.90px;font-size:12.4px;color:#000;">Đá Thạch Anh Cuddington 2 cm</div>
<svg style="position:absolute;left:27px;top:462px" width="6" height="6" viewBox="0 0 6 6"><path d="M0 0h6L0 6z" fill="#1e7b34"/></svg>
<div class="t" style="left:410px;transform: scaleX(0.852);transform-origin:0 0;top:461.90px;font-size:12.4px;color:#000;">m2</div>
<div class="t" style="right:213px;transform: scaleX(0.852);transform-origin:100% 0;top:461.90px;font-size:12.4px;color:#000;">-</div>
<div class="t" style="right:111px;transform: scaleX(0.852);transform-origin:100% 0;top:461.90px;font-size:12.4px;color:#000;">-</div>
<div class="t" style="right:42px;transform: scaleX(0.852);transform-origin:100% 0;top:461.90px;font-size:12.4px;color:#000;">-</div>
<div class="t" style="left:28px;transform: scaleX(0.852);transform-origin:0 0;top:481.90px;font-size:12.4px;color:#000;">0501027001</div>
<div class="t" style="left:119.4px;transform: scaleX(0.8534);transform-origin:0 0;top:481.90px;font-size:12.4px;color:#000;">Đá Thạch Anh Cambria Swanbridge 2cm</div>
<svg style="position:absolute;left:27px;top:482px" width="6" height="6" viewBox="0 0 6 6"><path d="M0 0h6L0 6z" fill="#1e7b34"/></svg>
<div class="t" style="left:410px;transform: scaleX(0.852);transform-origin:0 0;top:481.90px;font-size:12.4px;color:#000;">m2</div>
<div class="t" style="right:213px;transform: scaleX(0.852);transform-origin:100% 0;top:481.90px;font-size:12.4px;color:#000;">-</div>
<div class="t" style="right:111px;transform: scaleX(0.852);transform-origin:100% 0;top:481.90px;font-size:12.4px;color:#000;">-</div>
<div class="t" style="right:42px;transform: scaleX(0.852);transform-origin:100% 0;top:481.90px;font-size:12.4px;color:#000;">-</div>
<div class="t" style="left:28px;transform: scaleX(0.852);transform-origin:0 0;top:501.90px;font-size:12.4px;color:#000;">0501036001</div>
<div class="t" style="left:119.4px;transform: scaleX(0.8653);transform-origin:0 0;top:501.90px;font-size:12.4px;color:#000;">Đá Thạch Anh dày 2 cm - Skye</div>
<svg style="position:absolute;left:27px;top:502px" width="6" height="6" viewBox="0 0 6 6"><path d="M0 0h6L0 6z" fill="#1e7b34"/></svg>
<div class="t" style="left:410px;transform: scaleX(0.852);transform-origin:0 0;top:501.90px;font-size:12.4px;color:#000;">m2</div>
<div class="t" style="right:213px;transform: scaleX(0.852);transform-origin:100% 0;top:501.90px;font-size:12.4px;color:#000;">-</div>
<div class="t" style="right:111px;transform: scaleX(0.852);transform-origin:100% 0;top:501.90px;font-size:12.4px;color:#000;">-</div>
<div class="t" style="right:42px;transform: scaleX(0.852);transform-origin:100% 0;top:501.90px;font-size:12.4px;color:#000;">-</div>
<div class="t" style="left:28px;transform: scaleX(0.852);transform-origin:0 0;top:521.90px;font-size:12.4px;color:#000;">0501036002</div>
<div class="t" style="left:119.4px;transform: scaleX(0.8647);transform-origin:0 0;top:521.90px;font-size:12.4px;color:#000;">Đá Thạch anh dày 2 cm - Skye</div>
<svg style="position:absolute;left:27px;top:522px" width="6" height="6" viewBox="0 0 6 6"><path d="M0 0h6L0 6z" fill="#1e7b34"/></svg>
<div class="t" style="left:410px;transform: scaleX(0.852);transform-origin:0 0;top:521.90px;font-size:12.4px;color:#000;">m2</div>
<div class="t" style="right:213px;transform: scaleX(0.852);transform-origin:100% 0;top:521.90px;font-size:12.4px;color:#000;">-</div>
<div class="t" style="right:111px;transform: scaleX(0.852);transform-origin:100% 0;top:521.90px;font-size:12.4px;color:#000;">-</div>
<div class="t" style="right:42px;transform: scaleX(0.852);transform-origin:100% 0;top:521.90px;font-size:12.4px;color:#000;">-</div>
<div class="t" style="right:376px;transform: scaleX(0.852);transform-origin:100% 0;top:521.90px;font-size:12.4px;color:#000;">2</div>
<div class="t" style="right:273.5px;transform: scaleX(0.852);transform-origin:100% 0;top:521.90px;font-size:12.4px;color:#000;">5.798.400</div>
<div class="t" style="left:28px;transform: scaleX(0.852);transform-origin:0 0;top:541.90px;font-size:12.4px;color:#000;">0502001001</div>
<div class="t" style="left:119.4px;transform: scaleX(0.8427);transform-origin:0 0;top:541.90px;font-size:12.4px;color:#000;">Đá Marble RoseRed 18mm</div>
<svg style="position:absolute;left:27px;top:542px" width="6" height="6" viewBox="0 0 6 6"><path d="M0 0h6L0 6z" fill="#1e7b34"/></svg>
<div class="t" style="left:410px;transform: scaleX(0.852);transform-origin:0 0;top:541.90px;font-size:12.4px;color:#000;">m2</div>
<div class="t" style="right:213px;transform: scaleX(0.852);transform-origin:100% 0;top:541.90px;font-size:12.4px;color:#000;">-</div>
<div class="t" style="right:111px;transform: scaleX(0.852);transform-origin:100% 0;top:541.90px;font-size:12.4px;color:#000;">-</div>
<div class="t" style="right:42px;transform: scaleX(0.852);transform-origin:100% 0;top:541.90px;font-size:12.4px;color:#000;">-</div>
<div class="t" style="right:376px;transform: scaleX(0.852);transform-origin:100% 0;top:541.90px;font-size:12.4px;color:#000;">2</div>
<div class="t" style="right:273.5px;transform: scaleX(0.852);transform-origin:100% 0;top:541.90px;font-size:12.4px;color:#000;">1.848.000</div>
<div class="t" style="left:28px;transform: scaleX(0.852);transform-origin:0 0;top:561.90px;font-size:12.4px;color:#000;">0502002001</div>
<div class="t" style="left:119.4px;transform: scaleX(0.8576);transform-origin:0 0;top:561.90px;font-size:12.4px;color:#000;">Đá hoa Revenna Marble Rose Slabs 2 cm</div>
<svg style="position:absolute;left:27px;top:562px" width="6" height="6" viewBox="0 0 6 6"><path d="M0 0h6L0 6z" fill="#1e7b34"/></svg>
<div class="t" style="left:410px;transform: scaleX(0.852);transform-origin:0 0;top:561.90px;font-size:12.4px;color:#000;">m2</div>
<div class="t" style="right:213px;transform: scaleX(0.852);transform-origin:100% 0;top:561.90px;font-size:12.4px;color:#000;">-</div>
<div class="t" style="right:111px;transform: scaleX(0.852);transform-origin:100% 0;top:561.90px;font-size:12.4px;color:#000;">-</div>
<div class="t" style="right:42px;transform: scaleX(0.852);transform-origin:100% 0;top:561.90px;font-size:12.4px;color:#000;">-</div>
<div class="t" style="right:376px;transform: scaleX(0.852);transform-origin:100% 0;top:561.90px;font-size:12.4px;color:#000;">2</div>
<div class="t" style="right:273.5px;transform: scaleX(0.852);transform-origin:100% 0;top:561.90px;font-size:12.4px;color:#000;">1.361.360</div>
<div class="t" style="left:28px;transform: scaleX(0.852);transform-origin:0 0;top:581.90px;font-size:12.4px;color:#000;">0502004001</div>
<div class="t" style="left:119.4px;transform: scaleX(0.8309);transform-origin:0 0;top:581.90px;font-size:12.4px;color:#000;">Đá MarbleCream Delitatus 20mm</div>
<svg style="position:absolute;left:27px;top:582px" width="6" height="6" viewBox="0 0 6 6"><path d="M0 0h6L0 6z" fill="#1e7b34"/></svg>
<div class="t" style="left:410px;transform: scaleX(0.852);transform-origin:0 0;top:581.90px;font-size:12.4px;color:#000;">m2</div>
<div class="t" style="right:213px;transform: scaleX(0.852);transform-origin:100% 0;top:581.90px;font-size:12.4px;color:#000;">-</div>
<div class="t" style="right:111px;transform: scaleX(0.852);transform-origin:100% 0;top:581.90px;font-size:12.4px;color:#000;">-</div>
<div class="t" style="right:42px;transform: scaleX(0.852);transform-origin:100% 0;top:581.90px;font-size:12.4px;color:#000;">-</div>
<div class="t" style="right:376px;transform: scaleX(0.852);transform-origin:100% 0;top:581.90px;font-size:12.4px;color:#000;">24</div>
<div class="t" style="right:273.5px;transform: scaleX(0.852);transform-origin:100% 0;top:581.90px;font-size:12.4px;color:#000;">41.592.000</div>
<div class="t" style="left:28px;transform: scaleX(0.852);transform-origin:0 0;top:601.90px;font-size:12.4px;color:#000;">0502005001</div>
<div class="t" style="left:119.4px;transform: scaleX(0.8337);transform-origin:0 0;top:601.90px;font-size:12.4px;color:#000;">Đá hoa Marble - Crema Marfil Classic 2 cm</div>
<svg style="position:absolute;left:27px;top:602px" width="6" height="6" viewBox="0 0 6 6"><path d="M0 0h6L0 6z" fill="#1e7b34"/></svg>
<div class="t" style="left:410px;transform: scaleX(0.852);transform-origin:0 0;top:601.90px;font-size:12.4px;color:#000;">m2</div>
<div class="t" style="right:213px;transform: scaleX(0.852);transform-origin:100% 0;top:601.90px;font-size:12.4px;color:#000;">-</div>
<div class="t" style="right:111px;transform: scaleX(0.852);transform-origin:100% 0;top:601.90px;font-size:12.4px;color:#000;">-</div>
<div class="t" style="right:42px;transform: scaleX(0.852);transform-origin:100% 0;top:601.90px;font-size:12.4px;color:#000;">-</div>
<div class="t" style="right:376px;transform: scaleX(0.852);transform-origin:100% 0;top:601.90px;font-size:12.4px;color:#000;">2</div>
<div class="t" style="right:273.5px;transform: scaleX(0.852);transform-origin:100% 0;top:601.90px;font-size:12.4px;color:#000;">1.116.500</div>
</div>
<div style="position:absolute;left:393px;top:167px;width:372px;height:363px;box-sizing:border-box;border:1px solid #5f5f5f;background:#f0f0f0;box-shadow:0 6px 16px rgba(0,0,0,0.28);z-index:5">
</div>
<div style="position:absolute;left:0;top:0;width:886px;height:620px;z-index:6">
<div style="position:absolute;left:394px;top:168px;width:370px;height:30px;background:#fff"></div>
<div class="t" style="left:402.4px;top:172.84px;font-size:12px;color:#000;">Macro</div>
<div class="t" style="left:693.5px;transform: scaleX(0.78);transform-origin:0 0;top:172.15px;font-size:14px;color:#000;">?</div>
<svg style="position:absolute;left:735px;top:176px" width="12" height="12" viewBox="0 0 12 12"><path d="M1 1l10 10M11 1L1 11" stroke="#000" stroke-width="1.1"/></svg>
<div class="t" style="left:400px;top:201.68px;font-size:11.3px;color:#000;"><u>M</u>acro name:</div>
<div style="position:absolute;left:400px;top:221px;width:274px;height:20px;background:#fff;box-sizing:border-box;border:1px solid #7a7a7a"></div>
<div style="position:absolute;left:404px;top:225px;width:38px;height:13px;background:#c8c8c8"></div>
<div class="t" style="left:404px;top:222.05px;font-size:11.4px;color:#000;">Macro1</div>
<div style="position:absolute;left:442px;top:224px;width:1px;height:14px;background:#000"></div>
<div style="position:absolute;left:652px;top:222px;width:21px;height:18px;background:#fff;box-sizing:border-box;border:2px solid #b9b9b9"></div>
<svg style="position:absolute;left:655px;top:224px" width="14" height="14" viewBox="0 0 14 14"><path d="M7 2L2.5 7H5.5v3h3V7h3z" fill="#000"/><rect x="3" y="11" width="8" height="1.3" fill="#000"/></svg>
<div style="position:absolute;left:400px;top:240px;width:274px;height:161px;background:#fff;box-sizing:border-box;border:1px solid #7a7a7a"></div>
<div style="position:absolute;left:656px;top:241px;width:17px;height:159px;background:#f0f0f0"></div>
<div style="position:absolute;left:402px;top:243px;width:253px;height:13px;background:#0078d7"></div>
<div class="t" style="left:404px;top:240.05px;font-size:11.4px;color:#fff;">Macro1</div>
<svg style="position:absolute;left:657px;top:245px" width="14" height="12" viewBox="0 0 14 12"><path d="M3 8l4-4 4 4" fill="none" stroke="#bdbdbd" stroke-width="1.3"/></svg>
<svg style="position:absolute;left:657px;top:385px" width="14" height="12" viewBox="0 0 14 12"><path d="M3 4l4 4 4-4" fill="none" stroke="#bdbdbd" stroke-width="1.3"/></svg>
<div class="t" style="left:400.6px;top:412.78px;font-size:11.3px;color:#000;">M<u>a</u>cros in:</div>
<div style="position:absolute;left:462px;top:412px;width:212px;height:22px;background:#fff;box-sizing:border-box;border:1px solid #adadad"></div>
<div style="position:absolute;left:656px;top:413px;width:17px;height:20px;background:#e5e5e5;box-sizing:border-box;border:1px solid #adadad"></div>
<svg style="position:absolute;left:657px;top:417px" width="14" height="12" viewBox="0 0 14 12"><path d="M3 4l4 4 4-4" fill="none" stroke="#444" stroke-width="1.3"/></svg>
<div class="t" style="left:466px;top:412.91px;font-size:11.8px;color:#000;">All Open Workbooks</div>
<div class="t" style="left:400.6px;top:433.68px;font-size:11.6px;color:#000;">Description</div>
<div style="position:absolute;left:464px;top:443px;width:210px;height:1px;background:#dcdcdc"></div>
<div style="position:absolute;left:683px;top:221px;width:74px;height:22px;background:#e1e1e1;box-sizing:border-box;border:1px solid #adadad"></div>
<div class="t" style="left:720px;transform:translateX(-50%);top:222.22px;font-size:11.5px;color:#000;"><u>R</u>un</div>
<div style="position:absolute;left:683px;top:251px;width:74px;height:22px;background:#e1e1e1;box-sizing:border-box;border:1px solid #adadad"></div>
<div class="t" style="left:720px;transform:translateX(-50%);top:252.22px;font-size:11.5px;color:#000;"><u>S</u>tep Into</div>
<div style="position:absolute;left:683px;top:281px;width:74px;height:22px;background:#e1e1e1;box-sizing:border-box;border:1px solid #adadad"></div>
<div class="t" style="left:720px;transform:translateX(-50%);top:282.22px;font-size:11.5px;color:#000;"><u>E</u>dit</div>
<div style="position:absolute;left:683px;top:311px;width:74px;height:22px;background:#e1e1e1;box-sizing:border-box;border:1px solid #adadad"></div>
<div class="t" style="left:720px;transform:translateX(-50%);top:312.22px;font-size:11.5px;color:#8c8c8c;">Create</div>
<div style="position:absolute;left:683px;top:341px;width:74px;height:22px;background:#e1e1e1;box-sizing:border-box;border:1px solid #adadad"></div>
<div class="t" style="left:720px;transform:translateX(-50%);top:342.22px;font-size:11.5px;color:#000;"><u>D</u>elete</div>
<div style="position:absolute;left:683px;top:371px;width:74px;height:22px;background:#e1e1e1;box-sizing:border-box;border:1px solid #adadad"></div>
<div class="t" style="left:720px;transform:translateX(-50%);top:372.22px;font-size:11.5px;color:#000;"><u>O</u>ptions...</div>
<div style="position:absolute;left:683px;top:499px;width:74px;height:22px;background:#e1e1e1;box-sizing:border-box;border:1px solid #adadad"></div>
<div class="t" style="left:720px;transform:translateX(-50%);top:500.22px;font-size:11.5px;color:#000;">Cancel</div>
<div style="position:absolute;left:684px;top:224px;width:1px;height:15px;background:#0078d7"></div>
<div style="position:absolute;left:679px;top:219px;width:78px;height:25px;box-sizing:border-box;border:5px solid #ed1c24"></div>
</div>
<div style="position:absolute;left:42px;top:37px;width:57px;height:66px;box-sizing:border-box;border:5px solid #ed1c24;z-index:3"></div>

</body></html>
